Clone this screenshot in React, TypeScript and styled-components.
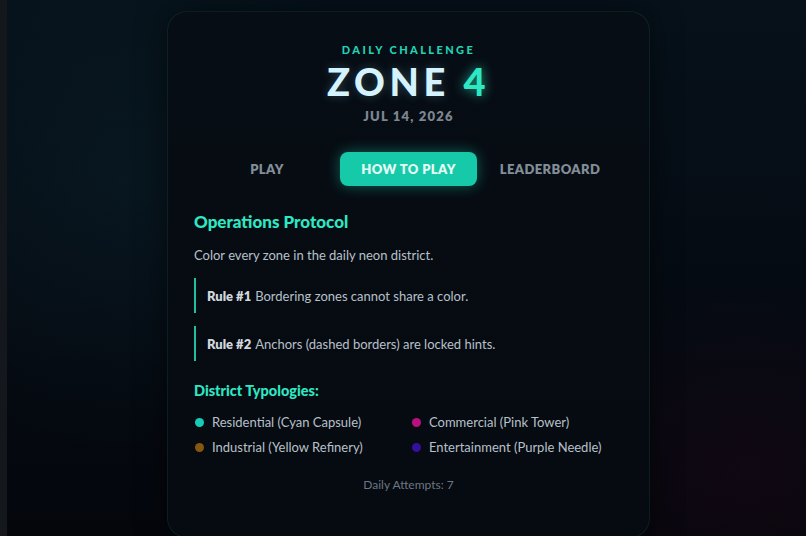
import React from "react";
import styled, { createGlobalStyle } from "styled-components";

const Global = createGlobalStyle`
  html, body { margin: 0; padding: 0; height: 100%; }
  body {
    background: #05080e;
    font-family: Lato, "Noto Sans", "Liberation Sans", sans-serif;
    overflow: hidden;
  }
  #root { height: 100%; }
`;

const Page = styled.div`
  width: 806px;
  height: 536px;
  box-sizing: border-box;
  border-left: 7px solid #14181c;
  background:
    radial-gradient(ellipse 300px 260px at 740px 470px, rgba(70, 10, 40, 0.18), transparent 70%),
    radial-gradient(ellipse 360px 360px at 120px 180px, rgba(12, 40, 50, 0.35), transparent 75%),
    linear-gradient(180deg, #06111a 0%, #050a12 60%, #04060c 100%);
  display: flex;
  justify-content: center;
  padding-top: 11px;
  padding-left: 4px;
  overflow: hidden;
`;

const Card = styled.div`
  width: 483px;
  height: 527px;
  flex: none;
  box-sizing: border-box;
  border-radius: 20px;
  border: 1px solid rgba(45, 212, 191, 0.1);
  background: linear-gradient(180deg, #070d14 0%, #060a11 100%);
  box-shadow: 0 0 30px rgba(0, 0, 0, 0.5);
  padding: 31px 26px 0 26px;
  display: flex;
  flex-direction: column;
`;

const Header = styled.div`
  display: flex;
  flex-direction: column;
  align-items: center;
`;

const Kicker = styled.div`
  font-size: 11px;
  font-weight: 900;
  letter-spacing: 2.4px;
  color: #22d3b4;
  line-height: 14px;
`;

const Title = styled.h1`
  margin: 2px 0 0 0;
  font-size: 38px;
  font-weight: 900;
  letter-spacing: 4.6px;
  line-height: 44px;
  color: #d4f3ff;
  text-shadow: 0 0 10px rgba(150, 230, 255, 0.25);
`;

const Accent = styled.span`
  color: #2ee8c4;
  text-shadow: 0 0 12px rgba(46, 232, 196, 0.7);
`;

const DateLine = styled.div`
  margin-top: 5px;
  font-size: 13px;
  font-weight: 800;
  letter-spacing: 1.2px;
  color: #7c8691;
  line-height: 16px;
`;

const Tabs = styled.div`
  margin-top: 28px;
  display: flex;
  justify-content: center;
`;

const Tab = styled.button<{ $active?: boolean }>`
  height: 34px;
  width: ${(p) => (p.$active ? "137px" : "146px")};
  border: none;
  border-radius: 8px;
  font-family: inherit;
  font-size: 13px;
  font-weight: 800;
  letter-spacing: 0.4px;
  cursor: pointer;
  background: ${(p) => (p.$active ? "#16c9a8" : "transparent")};
  color: ${(p) => (p.$active ? "#e4fbf5" : "#838e99")};
  box-shadow: ${(p) => (p.$active ? "0 0 14px rgba(22, 201, 168, 0.45)" : "none")};
`;

const SectionTitle = styled.h2<{ $size?: number }>`
  margin: 0;
  font-size: ${(p) => p.$size ?? 17}px;
  font-weight: 900;
  color: #2ee8c4;
  line-height: 20px;
`;

const Body = styled.div`
  margin-top: 26px;
  display: flex;
  flex-direction: column;
`;

const Para = styled.p`
  margin: 15px 0 0 0;
  font-size: 13px;
  color: #b7c0c9;
  line-height: 16px;
`;

const Rules = styled.div`
  margin-top: 15px;
  margin-bottom: 20px;
  display: flex;
  flex-direction: column;
  gap: 13px;
`;

const Rule = styled.div`
  height: 35px;
  border-left: 2px solid #1fbf9f;
  padding-left: 11px;
  display: flex;
  align-items: center;
  font-size: 13px;
  color: #b7c0c9;
`;

const RuleLabel = styled.b`
  color: #d0d7de;
  font-weight: 800;
  margin-right: 4px;
`;

const Legend = styled.div`
  margin-top: 13px;
  display: grid;
  grid-template-columns: 217px 1fr;
  row-gap: 9px;
`;

const LegendItem = styled.div`
  display: flex;
  align-items: center;
  gap: 8px;
  font-size: 13px;
  color: #b7c0c9;
  line-height: 16px;
`;

const Dot = styled.span<{ $color: string }>`
  width: 9px;
  height: 9px;
  border-radius: 50%;
  background: ${(p) => p.$color};
  margin-left: 1px;
  flex: none;
`;

const Footer = styled.div`
  margin-top: 22px;
  text-align: center;
  font-size: 12px;
  color: #6c7782;
`;

const items = [
  { color: "#18cbb8", label: "Residential (Cyan Capsule)" },
  { color: "#b8117f", label: "Commercial (Pink Tower)" },
  { color: "#85570f", label: "Industrial (Yellow Refinery)" },
  { color: "#3310a0", label: "Entertainment (Purple Needle)" },
];

export default function App() {
  return (
    <>
      <Global />
      <Page>
        <Card>
          <Header>
            <Kicker>DAILY CHALLENGE</Kicker>
            <Title>
              ZONE <Accent>4</Accent>
            </Title>
            <DateLine>JUL 14, 2026</DateLine>
          </Header>
          <Tabs>
            <Tab>PLAY</Tab>
            <Tab $active>HOW TO PLAY</Tab>
            <Tab>LEADERBOARD</Tab>
          </Tabs>
          <Body>
            <SectionTitle>Operations Protocol</SectionTitle>
            <Para>Color every zone in the daily neon district.</Para>
            <Rules>
              <Rule>
                <RuleLabel>Rule #1</RuleLabel> Bordering zones cannot share a color.
              </Rule>
              <Rule>
                <RuleLabel>Rule #2</RuleLabel> Anchors (dashed borders) are locked hints.
              </Rule>
            </Rules>
            <SectionTitle $size={14.5}>District Typologies:</SectionTitle>
            <Legend>
              {items.map((it) => (
                <LegendItem key={it.label}>
                  <Dot $color={it.color} />
                  {it.label}
                </LegendItem>
              ))}
            </Legend>
            <Footer>Daily Attempts: 7</Footer>
          </Body>
        </Card>
      </Page>
    </>
  );
}
